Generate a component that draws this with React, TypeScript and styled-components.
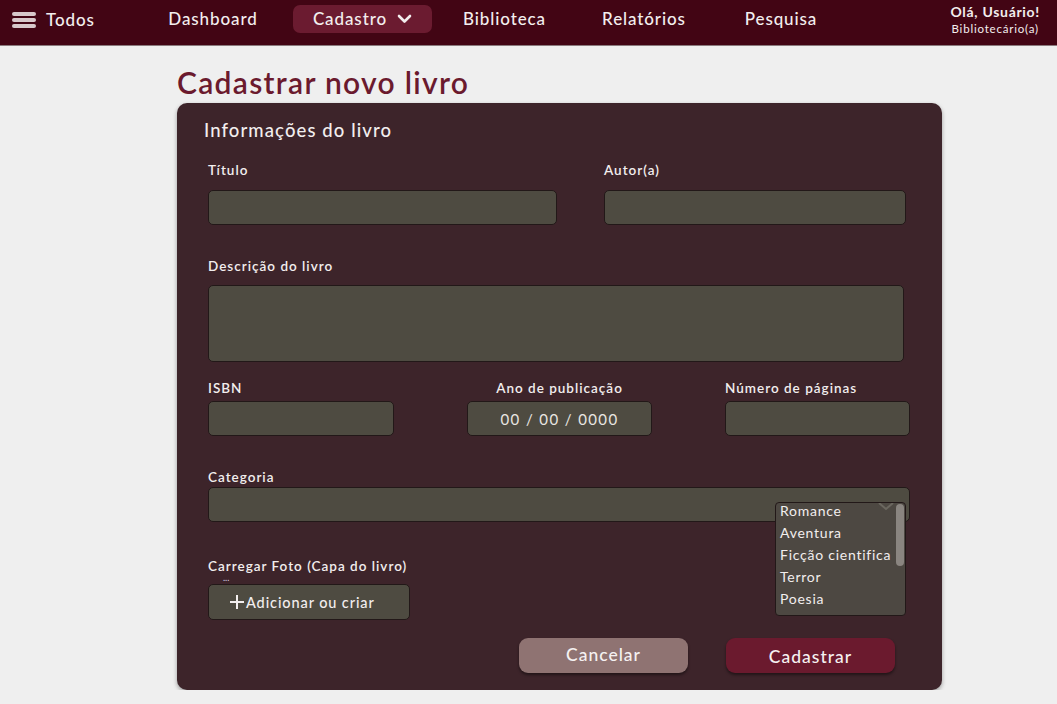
import React from 'react'
import styled, { createGlobalStyle } from 'styled-components'

const GlobalStyle = createGlobalStyle`
  html, body {
    margin: 0;
    padding: 0;
    background: #efefef;
    font-family: 'Lato', 'Noto Sans', sans-serif;
  }
  * {
    box-sizing: border-box;
  }
`

const NavBar = styled.header`
  height: 46px;
  background: #420514;
  border-bottom: 1px solid #8a7a7d;
  display: flex;
  align-items: center;
  padding: 0 17px 0 12px;
  color: #f3eeee;
  letter-spacing: 0.9px;
`

const AllMenu = styled.div`
  display: flex;
  align-items: center;
  gap: 10px;
  font-size: 17px;
  font-weight: 500;
  width: 156px;
  margin-top: -6px;
`

const NavLinks = styled.nav`
  display: flex;
  align-items: center;
  margin-top: -8px;
`

const NavLink = styled.a<{ $active?: boolean; $width: number }>`
  display: flex;
  align-items: center;
  justify-content: center;
  gap: 10px;
  height: 28px;
  width: ${({ $width }) => $width}px;
  border-radius: 7px;
  font-size: 17px;
  font-weight: 500;
  color: #f3eeee;
  background: ${({ $active }) => ($active ? '#6b1b30' : 'transparent')};
`

const UserBox = styled.div`
  margin-left: auto;
  display: flex;
  flex-direction: column;
  align-items: center;
  margin-top: -8px;

  & strong {
    font-size: 14px;
    font-weight: 700;
    letter-spacing: 0.7px;
  }
  & span {
    font-size: 11.5px;
    margin-top: 2px;
    letter-spacing: 0.8px;
  }
`

const Main = styled.main`
  padding: 18px 0 0 177px;
`

const PageTitle = styled.h1`
  margin: 0 0 3px;
  font-size: 30px;
  font-weight: 600;
  color: #6b1a2e;
  line-height: 36px;
  letter-spacing: 1.3px;
`

const Card = styled.section`
  width: 765px;
  height: 587px;
  background: #3d242a;
  border-radius: 10px;
  box-shadow: 0 2px 4px rgba(0, 0, 0, 0.35);
  padding: 15px 32px 0 31px;
  color: #f2eeee;
`

const CardTitle = styled.h2`
  margin: 0 0 0 -4px;
  font-size: 18.5px;
  font-weight: 500;
  line-height: 24px;
  letter-spacing: 1.1px;
`

const Row = styled.div<{ $top: number; $width?: number }>`
  display: flex;
  justify-content: space-between;
  margin-top: ${({ $top }) => $top}px;
  width: ${({ $width }) => $width || 702}px;
`

const Field = styled.div<{ $width: number; $center?: boolean }>`
  position: relative;
  display: flex;
  flex-direction: column;
  width: ${({ $width }) => $width}px;
  align-items: ${({ $center }) => ($center ? 'center' : 'stretch')};
`

const Label = styled.label<{ $gap: number }>`
  font-size: 13.5px;
  font-weight: 600;
  line-height: 18px;
  letter-spacing: 1px;
  margin-bottom: ${({ $gap }) => $gap}px;
`

const Input = styled.div<{ $height?: number }>`
  width: 100%;
  height: ${({ $height }) => $height || 35}px;
  background: #4e4b41;
  border: 1px solid #221818;
  border-radius: 5px;
  display: flex;
  align-items: center;
  justify-content: center;
  font-size: 15px;
  letter-spacing: 1.4px;
  color: #e9e6e2;
`

const Options = styled.ul`
  position: absolute;
  left: 567px;
  top: 34px;
  width: 131px;
  height: 114px;
  margin: 0;
  padding: 0 0 0 4px;
  list-style: none;
  background: #4d4842;
  border: 1px solid #221818;
  border-radius: 4px;
  overflow: hidden;

  & li {
    font-size: 14px;
    line-height: 22px;
    letter-spacing: 0.75px;
  }
  & li:first-of-type {
    margin-top: -3px;
  }
`

const ScrollThumb = styled.div`
  position: absolute;
  right: 1px;
  top: 1px;
  width: 8px;
  height: 62px;
  border-radius: 4px;
  background: #8a8580;
`

const Chevron = styled.svg`
  position: absolute;
  right: 10px;
  top: -1px;
`

const Dots = styled.div`
  font-size: 9px;
  line-height: 6px;
  height: 9px;
  margin: 0 0 0 15px;
  color: #d9d0e8;
`

const AddButton = styled.button`
  width: 202px;
  height: 36px;
  background: #4e4b41;
  border: 1px solid #221818;
  border-radius: 5px;
  display: flex;
  align-items: center;
  gap: 1px;
  padding: 0 0 0 20px;
  font-family: inherit;
  font-size: 14.5px;
  font-weight: 500;
  letter-spacing: 0.9px;
  color: #f2eeee;
`

const Actions = styled.div`
  display: flex;
  gap: 38px;
  margin: 18px 0 0 311px;
`

const ActionButton = styled.button<{ $primary?: boolean }>`
  width: 169px;
  height: 35px;
  border: none;
  border-radius: 9px;
  background: ${({ $primary }) => ($primary ? '#6b1a2e' : '#8f7372')};
  box-shadow: 0 2px 3px rgba(0, 0, 0, 0.45);
  font-family: inherit;
  font-size: 17.5px;
  font-weight: 500;
  letter-spacing: 1px;
  color: #f5f1f1;
  padding-bottom: ${({ $primary }) => ($primary ? 0 : 4)}px;
`

const categories = ['Romance', 'Aventura', 'Ficção cientifica', 'Terror', 'Poesia']

const HamburgerIcon = () => (
  <svg width="24" height="18" viewBox="0 0 24 18">
    <rect x="0" y="1" width="24" height="4" rx="2" fill="#d8c8cb" />
    <rect x="0" y="7" width="24" height="4" rx="2" fill="#d8c8cb" />
    <rect x="0" y="13" width="24" height="4" rx="2" fill="#d8c8cb" />
  </svg>
)

export default function App() {
  return (
    <>
      <GlobalStyle />
      <NavBar>
        <AllMenu>
          <HamburgerIcon />
          <span>Todos</span>
        </AllMenu>
        <NavLinks>
          <NavLink $width={90}>Dashboard</NavLink>
          <NavLink $width={139} $active style={{ marginLeft: 35 }}>
            Cadastro
            <svg width="15" height="10" viewBox="0 0 15 10">
              <path d="M2 2 L7.5 7.5 L13 2" fill="none" stroke="#f3eeee" strokeWidth="2.6" strokeLinecap="round" strokeLinejoin="round" />
            </svg>
          </NavLink>
          <NavLink $width={85} style={{ marginLeft: 30 }}>Biblioteca</NavLink>
          <NavLink $width={86} style={{ marginLeft: 54 }}>Relatórios</NavLink>
          <NavLink $width={74} style={{ marginLeft: 57 }}>Pesquisa</NavLink>
        </NavLinks>
        <UserBox>
          <strong>Olá, Usuário!</strong>
          <span>Bibliotecário(a)</span>
        </UserBox>
      </NavBar>
      <Main>
        <PageTitle>Cadastrar novo livro</PageTitle>
        <Card>
          <CardTitle>Informações do livro</CardTitle>
          <Row $top={19} $width={698}>
            <Field $width={349}>
              <Label $gap={11}>Título</Label>
              <Input />
            </Field>
            <Field $width={302}>
              <Label $gap={11}>Autor(a)</Label>
              <Input />
            </Field>
          </Row>
          <Row $top={32}>
            <Field $width={696}>
              <Label $gap={10}>Descrição do livro</Label>
              <Input $height={77} />
            </Field>
          </Row>
          <Row $top={17}>
            <Field $width={186}>
              <Label $gap={4}>ISBN</Label>
              <Input />
            </Field>
            <Field $width={185} $center>
              <Label $gap={4}>Ano de publicação</Label>
              <Input>00 / 00 / 0000</Input>
            </Field>
            <Field $width={185}>
              <Label $gap={4}>Número de páginas</Label>
              <Input />
            </Field>
          </Row>
          <Row $top={32}>
            <Field $width={702}>
              <Label $gap={1}>Categoria</Label>
              <Input />
              <Options>
                <Chevron width="18" height="10" viewBox="0 0 18 10">
                  <path d="M2 1 L9 7 L16 1" fill="none" stroke="#6b675f" strokeWidth="2" />
                </Chevron>
                {categories.map(c => (
                  <li key={c}>{c}</li>
                ))}
                <ScrollThumb />
              </Options>
            </Field>
          </Row>
          <Row $top={35}>
            <Field $width={202}>
              <Label $gap={0}>Carregar Foto (Capa do livro)</Label>
              <Dots>...</Dots>
              <AddButton>
                <svg width="16" height="16" viewBox="0 0 16 16">
                  <path d="M8 1 V15 M1 8 H15" stroke="#f2eeee" strokeWidth="2" />
                </svg>
                Adicionar ou criar
              </AddButton>
            </Field>
          </Row>
          <Actions>
            <ActionButton>Cancelar</ActionButton>
            <ActionButton $primary>Cadastrar</ActionButton>
          </Actions>
        </Card>
      </Main>
    </>
  )
}
